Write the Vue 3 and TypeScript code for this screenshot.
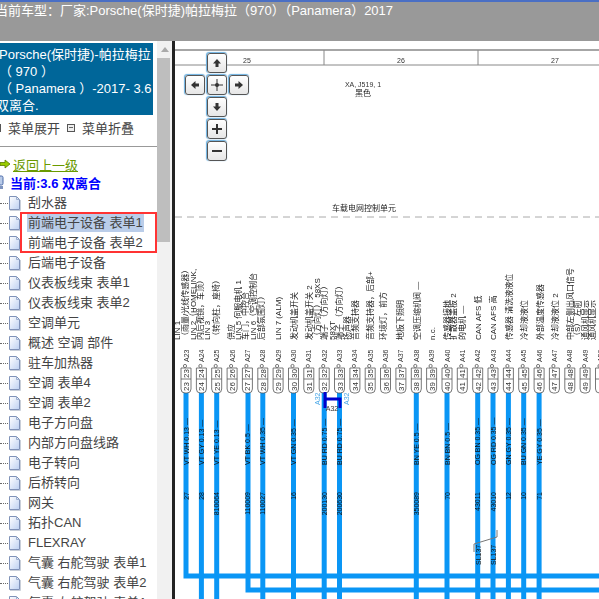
<template>
  <div class="page">
    <header class="top-bar">
      <div class="top-title">当前车型：厂家:Porsche(保时捷)帕拉梅拉（970）（Panamera）2017</div>
    </header>
    <div class="body-row">
      <aside class="side">
        <div class="side-pane">
          <div class="car-title">
            <div>Porsche(保时捷)-帕拉梅拉</div>
            <div>（ 970 ）</div>
            <div>（ Panamera ）-2017- 3.6</div>
            <div class="title-end">双离合.</div>
          </div>
          <div class="menu-tools">
            <span class="tool-box"></span><span class="tool-label">菜单展开</span>
            <span class="tool-box"></span><span class="tool-label">菜单折叠</span>
          </div>
          <div class="back-row">
            <svg class="back-icon" width="10" height="10" viewBox="0 0 10 10">
              <path d="M0 3.5H5V1L10 5 5 9V6.5H0Z" fill="#9c0" stroke="#5a7a00" stroke-width=".8" />
            </svg>
            <a class="back-link">返回上一级</a>
          </div>
          <div class="current-row">
            <svg class="pc-icon" width="9" height="15" viewBox="0 0 9 15">
              <rect x="0" y="1" width="8" height="9" rx="1.5" fill="#b9cbe8" stroke="#4a6aa8" />
              <rect x="0" y="11" width="8" height="3" fill="#7d93bd" />
            </svg>
            <span>当前:3.6 双离合</span>
          </div>
          <ul class="tree">
            <li v-for="(item, i) in menuItems" :key="i" class="tree-row">
              <span class="dots"></span>
              <svg class="doc" width="13" height="15" viewBox="0 0 13 15">
                <defs>
                  <linearGradient :id="'paper' + i" x1="0" y1="0" x2="1" y2="1">
                    <stop offset="0" stop-color="#ffffff" />
                    <stop offset="1" stop-color="#bcd0f2" />
                  </linearGradient>
                </defs>
                <path d="M1.5 .5H8.5L11.5 3.5V13.5H1.5Z" :fill="`url(#paper${i})`" stroke="#7f92b8" />
                <path d="M8.5 .5V3.5H11.5" fill="none" stroke="#9fb0cf" />
                <path d="M2 14.5H12.5V4" fill="none" stroke="#c9cfd9" />
              </svg>
              <span class="tree-text" :class="{ selected: i === 1 }">{{ item }}</span>
            </li>
            <li class="red-mark"></li>
          </ul>
        </div>
        <div class="scroll-bar">
          <span class="scroll-arrow"></span>
          <span class="scroll-thumb"></span>
        </div>
      </aside>

      <main class="canvas">
        <svg class="sheet" width="424" height="558" viewBox="175 41 424 558">
          <g class="grid-lines">
            <line x1="175" y1="50" x2="599" y2="50" class="grid-top" />
            <line x1="175" y1="65" x2="599" y2="65" />
            <line x1="324" y1="50" x2="324" y2="65" />
            <line x1="478" y1="50" x2="478" y2="65" />
          </g>
          <line x1="175" y1="217" x2="599" y2="217" class="dash-line" />

          <text x="247" y="63" class="sheet-text" text-anchor="middle">25</text>
          <text x="401" y="63" class="sheet-text" text-anchor="middle">26</text>
          <text x="555" y="63" class="sheet-text" text-anchor="middle">27</text>
          <text x="363" y="87" class="sheet-text" text-anchor="middle">XA, J519, 1</text>
          <text x="363" y="96" class="sheet-cjk" text-anchor="middle">黑色</text>
          <text x="364" y="211" class="sheet-cjk" text-anchor="middle">车载电网控制单元</text>

          <!-- 横向线束 -->
          <path d="M186 392V576H599" class="wire" />
          <path d="M248 392V590H599" class="wire" />
          <line
            v-for="w in throughWires"
            :key="'w' + w.pin"
            :x1="pinX(w.pin)"
            y1="392"
            :x2="pinX(w.pin)"
            y2="599"
            class="wire"
          />

          <!-- 引脚 -->
          <g v-for="pin in pins" :key="pin">
            <text :transform="vertical(pinX(pin) + 2.5, 362)" class="pin-name">A{{ pin }}</text>
            <path
              :d="`M${pinX(pin) - 5} 368H${pinX(pin) + 5}V389Q${pinX(pin) + 5} 393 ${pinX(pin) + 1} 393H${pinX(pin) - 1}Q${pinX(pin) - 5} 393 ${pinX(pin) - 5} 389Z`"
              class="pin-box"
            />
            <line :x1="pinX(pin) - 5" y1="379" :x2="pinX(pin) + 5" y2="379" class="pin-split" />
            <circle :cx="pinX(pin) - 1" cy="366" r="1.6" class="pin-box" />
            <text :transform="vertical(pinX(pin) + 3, 378)" class="pin-num">{{ pin }}</text>
            <text :transform="vertical(pinX(pin) + 3, 391)" class="pin-num">{{ pin }}</text>
          </g>

          <!-- 针脚说明 -->
          <text
            v-for="(label, i) in pinLabels"
            :key="'l' + i"
            :transform="vertical(label.x + 3, 340)"
            class="sheet-cjk"
          >{{ label.text }}</text>

          <!-- 导线标注 -->
          <g v-for="w in throughWires.concat(endWires)" :key="'t' + w.pin">
            <text :transform="vertical(pinX(w.pin) + 2.5, 465)" class="wire-text">{{ w.spec }} —</text>
            <text :transform="vertical(pinX(w.pin) + 2.5, 492)" class="wire-text" text-anchor="end">{{ w.code }}</text>
          </g>

          <!-- A32 跨接 -->
          <path d="M325 392V408M325 399H340V408" class="bridge" />
          <text :transform="vertical(320, 405)" class="bridge-label">A32</text>
          <text :transform="vertical(349, 405)" class="bridge-label">A32</text>
          <text x="332" y="411" class="sheet-text" text-anchor="middle">A32</text>

          <!-- 双绞线 -->
          <path d="M497 530V537L474 544V552" class="twist" />
          <text :transform="vertical(480.5, 565)" class="wire-text">SL137</text>
          <text :transform="vertical(495.5, 565)" class="wire-text">SL137</text>
        </svg>

        <nav class="pan-zoom">
          <button
            v-for="b in navButtons"
            :key="b.name"
            class="nav-btn"
            :style="{ gridColumn: b.col, gridRow: b.row }"
            :aria-label="b.name"
          >
            <svg width="14" height="14" viewBox="0 0 14 14">
              <path :d="b.d" :fill="b.line ? 'none' : '#333'" :stroke="b.line ? '#333' : 'none'" :stroke-width="b.line ?? 0" />
              <circle v-if="b.name === 'center'" cx="7" cy="7" r="2" fill="#333" />
            </svg>
          </button>
        </nav>
      </main>
    </div>
  </div>
</template>

<script setup lang="ts">
interface Wire {
  pin: number;
  spec: string;
  code: string;
}

const menuItems: string[] = [
  '刮水器',
  '前端电子设备 表单1',
  '前端电子设备 表单2',
  '后端电子设备',
  '仪表板线束 表单1',
  '仪表板线束 表单2',
  '空调单元',
  '概述 空调 部件',
  '驻车加热器',
  '空调 表单4',
  '空调 表单2',
  '电子方向盘',
  '内部方向盘线路',
  '电子转向',
  '后桥转向',
  '网关',
  '拓扑CAN',
  'FLEXRAY',
  '气囊 右舵驾驶 表单1',
  '气囊 右舵驾驶 表单2',
  '气囊 左舵驾驶 表单1',
];

const pins: number[] = Array.from({ length: 28 }, (_, i) => i + 23);

const pinX = (pin: number): number => Math.round((186 + (pin - 23) * 15.35) * 10) / 10;
const vertical = (x: number, y: number): string => `rotate(-90 ${x} ${y}) translate(${x} ${y})`;

// 这两根在横线处结束
const endWires: Wire[] = [
  { pin: 23, spec: 'VT WH 0.13', code: '27' },
  { pin: 27, spec: 'VT BK 0.5', code: '110009' },
];

const throughWires: Wire[] = [
  { pin: 24, spec: 'VT GY 0.13', code: '28' },
  { pin: 25, spec: 'VT YE 0.13', code: '810064' },
  { pin: 28, spec: 'VT WH 0.35', code: '110027' },
  { pin: 30, spec: 'VT GN 0.35', code: '16' },
  { pin: 32, spec: 'BU RD 0.75', code: '200130' },
  { pin: 33, spec: 'BU RD 0.75', code: '200630' },
  { pin: 38, spec: 'BN YE 0.5', code: '350089' },
  { pin: 40, spec: 'BN BN 0.5', code: '70' },
  { pin: 42, spec: 'OG BN 0.35', code: '43011' },
  { pin: 43, spec: 'OG RD 0.35', code: '43010' },
  { pin: 44, spec: 'GN GY 0.35', code: '12' },
  { pin: 45, spec: 'BU GN 0.35', code: '10' },
  { pin: 46, spec: 'YE GY 0.35', code: '71' },
];

const pinLabels: { x: number; text: string }[] = [
  { x: 177, text: 'LIN 1' },
  { x: 185, text: '（雨量/光线传感器）' },
  { x: 193, text: 'LIN 2（HOMELINK,' },
  { x: 200, text: '内后视镜，车顶）' },
  { x: 207, text: 'LIN 3' },
  { x: 216, text: '（转向柱，座椅）' },
  { x: 231, text: '供应' },
  { x: 238, text: 'LIN 5 伺服电机 1' },
  { x: 245, text: '车门，中控台' },
  { x: 253, text: 'LIN 6（空调控制台' },
  { x: 261, text: '后部氛围灯）' },
  { x: 278, text: 'LIN 7 (ALM)' },
  { x: 294, text: '发动机盖开关' },
  { x: 309, text: '发动机盖开关 2' },
  { x: 317, text: '（方向灯） 58XS' },
  { x: 324, text: '端子 （方向灯）' },
  { x: 332, text: '58XT' },
  { x: 339, text: '端子 （方向灯）' },
  { x: 347, text: '扬声器' },
  { x: 355, text: '音频支持器' },
  { x: 370, text: '音频支持器，后部+' },
  { x: 383, text: '环境灯，前方' },
  { x: 400, text: '地板下照明' },
  { x: 417, text: '空调压缩机阀 —' },
  { x: 432, text: 'n.c.' },
  { x: 447, text: '传感器接地' },
  { x: 453, text: '扩散器盖板 2' },
  { x: 462, text: '的电机 —' },
  { x: 478, text: 'CAN AFS 低' },
  { x: 493, text: 'CAN AFS 高' },
  { x: 509, text: '传感器 清洗液液位' },
  { x: 524, text: '冷却液液位' },
  { x: 540, text: '外部温度传感器' },
  { x: 555, text: '冷却液液位 2' },
  { x: 570, text: '中部左侧出风口信号' },
  { x: 577, text: '（S） 左前' },
  { x: 585, text: '通风机显示' },
  { x: 592, text: '通风机显示' },
];

const navButtons: { name: string; col: number; row: number; d: string; line?: number }[] = [
  { name: 'up', col: 2, row: 1, d: 'M7 3 11 7.5H8.5V11H5.5V7.5H3Z' },
  { name: 'left', col: 1, row: 2, d: 'M3 7 7.5 3V5.5H11V8.5H7.5V11Z' },
  { name: 'center', col: 2, row: 2, d: 'M7 1V13M1 7H13', line: 1 },
  { name: 'right', col: 3, row: 2, d: 'M11 7 6.5 3V5.5H3V8.5H6.5V11Z' },
  { name: 'down', col: 2, row: 3, d: 'M7 11 11 6.5H8.5V3H5.5V6.5H3Z' },
  { name: 'plus', col: 2, row: 4, d: 'M7 2V12M2 7H12', line: 2 },
  { name: 'minus', col: 2, row: 5, d: 'M2 7H12', line: 2 },
];
</script>

<style>
html,
body {
  margin: 0;
  overflow: hidden;
  background: #fff;
}
</style>

<style scoped>
.page {
  width: 599px;
  height: 599px;
  display: flex;
  flex-direction: column;
  overflow: hidden;
  font-family: "Liberation Sans", "Noto Sans CJK SC", sans-serif;
  font-size: 13px;
  color: #333;
}

.top-bar {
  height: 39px;
  flex-shrink: 0;
  background: #999;
  border-top: 2px solid #4a6fc4;
  overflow: hidden;
}

.top-title {
  margin-left: -5px;
  line-height: 17px;
  font-size: 13px;
  color: #fff;
  white-space: nowrap;
}

.body-row {
  flex: 1;
  display: flex;
  min-height: 0;
}

.side {
  width: 172px;
  flex-shrink: 0;
  display: flex;
  border-right: 3px solid #222;
  background: #fff;
}

.side-pane {
  width: 157px;
  flex-shrink: 0;
  padding-top: 2px;
  overflow: hidden;
}

.car-title {
  width: 153px;
  height: 72px;
  box-sizing: border-box;
  padding-top: 3px;
  background: #069;
  color: #fff;
  font-size: 13px;
  line-height: 17px;
  white-space: nowrap;
  text-indent: -1px;
}

.title-end {
  text-indent: -4px;
}

.menu-tools {
  height: 25px;
  padding-bottom: 6px;
  display: flex;
  align-items: center;
  margin-left: -7px;
  border-bottom: 1px solid #999;
}

.tool-box {
  width: 6px;
  height: 6px;
  border: 1px solid #555;
  background: linear-gradient(#666, #666) center / 4px 1px no-repeat, #eee;
  margin-right: 7px;
}

.tool-label {
  width: 59px;
  color: #444;
}

.back-row {
  height: 18px;
  margin-top: 8px;
  display: flex;
  align-items: center;
  gap: 3px;
}

.back-link {
  color: #6a9a00;
  text-decoration: underline;
}

.current-row {
  height: 18px;
  display: flex;
  align-items: center;
  gap: 6px;
  color: #00f;
  font-weight: 700;
}

.pc-icon {
  margin-left: -5px;
}

.tree {
  position: relative;
  margin: 0;
  padding: 2px 0 0;
  list-style: none;
}

.tree-row {
  height: 20px;
  display: flex;
  align-items: center;
  white-space: nowrap;
}

.dots {
  width: 8px;
  border-top: 1px dotted #666;
}

.doc {
  flex-shrink: 0;
  margin-right: 7px;
}

.tree-text {
  padding: 1px 1px;
  margin-left: -1px;
  line-height: 16px;
  color: #444;
}

.selected {
  background: #bacde9;
}

.red-mark {
  position: absolute;
  left: 20px;
  top: 21px;
  width: 133px;
  height: 37px;
  border: 2px solid #f33;
}

.scroll-bar {
  width: 15px;
  flex-shrink: 0;
  display: flex;
  flex-direction: column;
  align-items: center;
  background: #f1f1f1;
}

.scroll-arrow {
  width: 0;
  height: 0;
  margin: 6px 0 6px;
  border: 4px solid transparent;
  border-top: 0;
  border-bottom: 5px solid #aaa;
}

.scroll-thumb {
  width: 13px;
  height: 184px;
  margin-right: 2px;
  background: #bebebe;
}

.canvas {
  position: relative;
  flex: 1;
  min-width: 0;
  overflow: hidden;
}

.sheet {
  display: block;
  filter: blur(0.35px);
}

.grid-lines line {
  stroke: #888;
  stroke-width: 1;
}

.grid-lines .grid-top {
  stroke-width: 1.5;
}

.dash-line {
  stroke: #aaa;
  stroke-width: 1;
  stroke-dasharray: 7 5;
}

.sheet-text {
  font-size: 7px;
  fill: #333;
}

.sheet-cjk {
  font-size: 8px;
  fill: #222;
}

.wire {
  fill: none;
  stroke: #0a96f5;
  stroke-width: 5;
}

.pin-box {
  fill: #fff;
  stroke: #555;
  stroke-width: 0.8;
}

.pin-split {
  stroke: #555;
  stroke-width: 0.8;
}

.pin-name {
  font-size: 7px;
  fill: #333;
}

.pin-num {
  font-size: 8px;
  fill: #333;
}

.wire-text {
  font-size: 7px;
  fill: #111;
}

.bridge {
  fill: none;
  stroke: #00c;
  stroke-width: 3;
}

.bridge-label {
  font-size: 7px;
  fill: #4aa8e8;
}

.twist {
  fill: none;
  stroke: #777;
  stroke-width: 1;
}

.pan-zoom {
  position: absolute;
  left: 10px;
  top: 12px;
  display: grid;
  grid-template-columns: repeat(3, 20px);
  grid-auto-rows: 20px;
  gap: 2px;
}

.nav-btn {
  width: 20px;
  height: 20px;
  padding: 0;
  display: flex;
  align-items: center;
  justify-content: center;
  box-sizing: border-box;
  background: linear-gradient(#fff, #e6e6e6);
  border: 1px solid #555;
  border-radius: 3px;
  box-shadow: -0.5px -0.5px 1px #6ab0e0;
}
</style>
